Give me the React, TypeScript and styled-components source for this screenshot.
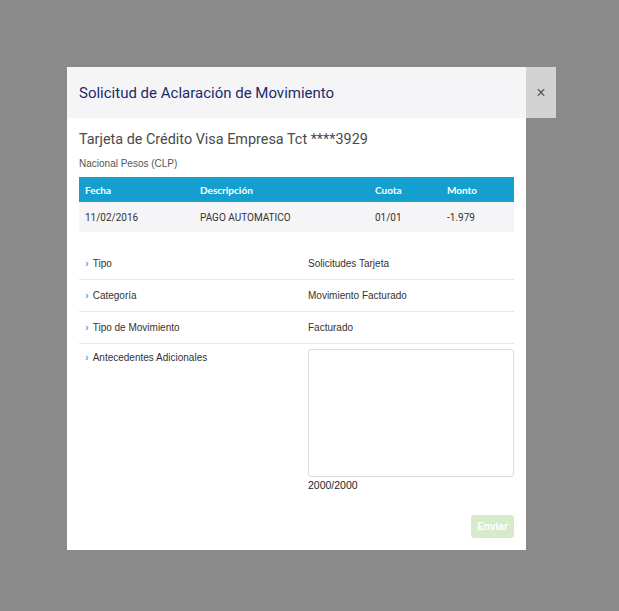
import React from "react";
import styled, { createGlobalStyle } from "styled-components";

const Global = createGlobalStyle`
  html, body { margin: 0; padding: 0; background: #8a8a8a; }
  body { font-family: "Liberation Sans", Arial, sans-serif; }
`;

const Page = styled.div`
  width: 619px;
  height: 611px;
  background: #8a8a8a;
  padding-top: 67px;
  padding-left: 67px;
  box-sizing: border-box;
`;

const Modal = styled.div`
  position: relative;
  width: 459px;
  height: 483px;
  background: #fff;
  display: flex;
  flex-direction: column;
`;

const Header = styled.div`
  height: 51px;
  background: #f5f5f7;
  display: flex;
  align-items: center;
  padding: 0 12px;
`;

const Title = styled.h1`
  margin: 0;
  font-family: Roboto, "Liberation Sans", sans-serif;
  font-weight: 400;
  font-size: 15px;
  color: #1b2b6b;
`;

const Close = styled.button`
  position: absolute;
  top: 0;
  right: -30px;
  width: 30px;
  height: 51px;
  border: 0;
  padding: 0;
  background: #d3d3d3;
  color: #555;
  font-family: "Liberation Sans", sans-serif;
  font-size: 16px;
  display: flex;
  align-items: center;
  justify-content: center;
`;

const Body = styled.div`
  padding: 13px 12px 0;
  display: flex;
  flex-direction: column;
`;

const CardTitle = styled.h2`
  margin: 0;
  font-family: Roboto, "Liberation Sans", sans-serif;
  font-weight: 400;
  font-size: 14.4px;
  color: #4a4a4a;
  line-height: 18px;
`;

const Currency = styled.div`
  margin-top: 8px;
  font-size: 10px;
  color: #555;
  line-height: 13px;
`;

const Table = styled.div`
  margin-top: 7px;
  display: flex;
  flex-direction: column;
`;

const cols = "115px 175px 72px 1fr";

const THead = styled.div`
  display: grid;
  grid-template-columns: ${cols};
  height: 25px;
  align-items: center;
  background: #149fcf;
  padding-left: 6px;
`;

const Th = styled.div`
  font-family: Lato, "Liberation Sans", sans-serif;
  font-weight: 700;
  font-size: 10px;
  color: #fff;
`;

const TRow = styled.div`
  display: grid;
  grid-template-columns: ${cols};
  height: 30px;
  align-items: center;
  background: #f5f5f7;
  padding-left: 6px;
`;

const Td = styled.div`
  font-family: Roboto, "Liberation Sans", sans-serif;
  font-size: 10px;
  color: #333;
`;

const Fields = styled.div`
  margin-top: 16px;
  display: flex;
  flex-direction: column;
`;

const Field = styled.div<{ $tall?: boolean }>`
  display: grid;
  grid-template-columns: 229px 1fr;
  align-items: ${(p) => (p.$tall ? "start" : "center")};
  height: ${(p) => (p.$tall ? "auto" : "31px")};
  border-bottom: ${(p) => (p.$tall ? "none" : "1px solid #e8e8e8")};
  padding-top: ${(p) => (p.$tall ? "5px" : "0")};
`;

const Label = styled.div<{ $offset?: boolean }>`
  display: flex;
  align-items: center;
  gap: 4px;
  padding-left: 6px;
  padding-top: ${(p) => (p.$offset ? "2px" : "0")};
  font-size: 10px;
  color: #333;
  line-height: 13px;
`;

const Chevron = styled.span`
  color: #4db3dc;
  font-size: 11px;
  font-weight: 700;
  line-height: 1;
`;

const Value = styled.div`
  font-size: 10px;
  color: #333;
`;

const AreaWrap = styled.div`
  display: flex;
  flex-direction: column;
`;

const TextArea = styled.textarea`
  display: block;
  width: 206px;
  height: 128px;
  box-sizing: border-box;
  border: 1px solid #dcdcdc;
  border-radius: 3px;
  resize: none;
  margin: 0;
`;

const Counter = styled.div`
  margin-top: 2px;
  font-size: 10.5px;
  color: #222;
  line-height: 13px;
`;

const Footer = styled.div`
  display: flex;
  justify-content: flex-end;
  margin-top: 23px;
`;

const Send = styled.button`
  width: 43px;
  height: 23px;
  border: 0;
  border-radius: 3px;
  background: #d6ebcb;
  color: #fff;
  font-family: "Liberation Sans", sans-serif;
  font-weight: 700;
  font-size: 10px;
  padding: 0;
`;

const fields = [
  { label: "Tipo", value: "Solicitudes Tarjeta" },
  { label: "Categoría", value: "Movimiento Facturado" },
  { label: "Tipo de Movimiento", value: "Facturado" },
];

export default function App() {
  return (
    <Page>
      <Global />
      <Modal>
        <Header>
          <Title>Solicitud de Aclaración de Movimiento</Title>
        </Header>
        <Close aria-label="Cerrar">×</Close>
        <Body>
          <CardTitle>Tarjeta de Crédito Visa Empresa Tct ****3929</CardTitle>
          <Currency>Nacional Pesos (CLP)</Currency>
          <Table>
            <THead>
              <Th>Fecha</Th>
              <Th>Descripción</Th>
              <Th>Cuota</Th>
              <Th>Monto</Th>
            </THead>
            <TRow>
              <Td>11/02/2016</Td>
              <Td>PAGO AUTOMATICO</Td>
              <Td>01/01</Td>
              <Td>-1.979</Td>
            </TRow>
          </Table>
          <Fields>
            {fields.map((f) => (
              <Field key={f.label}>
                <Label>
                  <Chevron>›</Chevron>
                  {f.label}
                </Label>
                <Value>{f.value}</Value>
              </Field>
            ))}
            <Field $tall>
              <Label $offset>
                <Chevron>›</Chevron>
                Antecedentes Adicionales
              </Label>
              <AreaWrap>
                <TextArea />
                <Counter>2000/2000</Counter>
              </AreaWrap>
            </Field>
          </Fields>
          <Footer>
            <Send>Enviar</Send>
          </Footer>
        </Body>
      </Modal>
    </Page>
  );
}
